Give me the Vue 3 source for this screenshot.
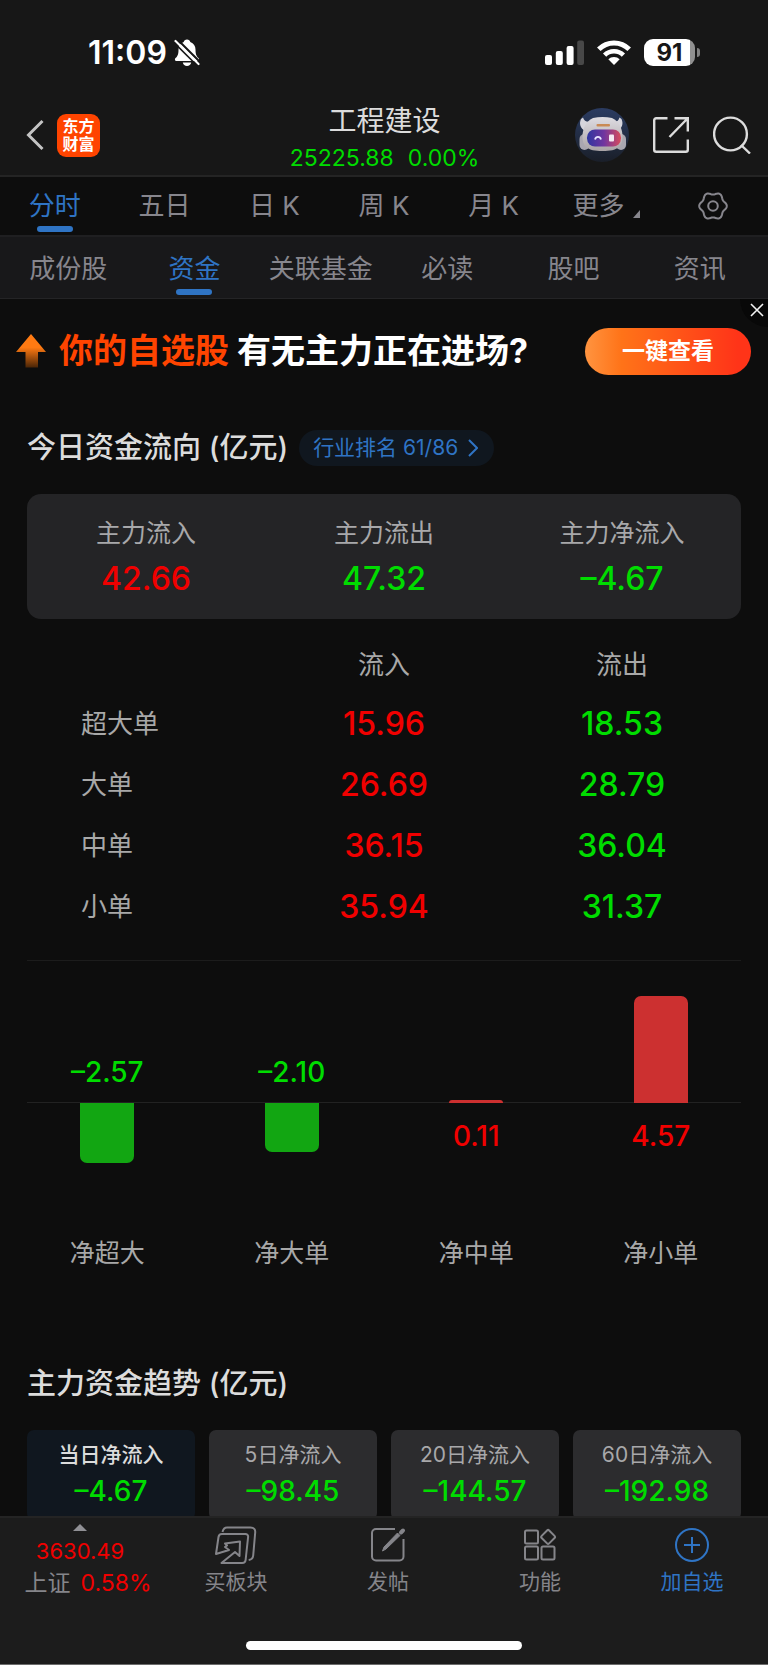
<script setup>
import { ref } from 'vue'

const periods = ['分时', '五日', '日 K', '周 K', '月 K']
const activePeriod = ref('分时')

const sections = ['成份股', '资金', '关联基金', '必读', '股吧', '资讯']
const activeSection = ref('资金')

const showBanner = ref(true)

const summary = [
  { label: '主力流入', value: '42.66', tone: 'up' },
  { label: '主力流出', value: '47.32', tone: 'down' },
  { label: '主力净流入', value: '–4.67', tone: 'down' }
]

const orders = [
  { name: '超大单', inflow: '15.96', outflow: '18.53' },
  { name: '大单', inflow: '26.69', outflow: '28.79' },
  { name: '中单', inflow: '36.15', outflow: '36.04' },
  { name: '小单', inflow: '35.94', outflow: '31.37' }
]

const nets = [
  { name: '净超大', value: -2.57 },
  { name: '净大单', value: -2.1 },
  { name: '净中单', value: 0.11 },
  { name: '净小单', value: 4.57 }
]
const PX_PER_UNIT = 23.4
const barHeight = (v) => Math.round(Math.abs(v) * PX_PER_UNIT) + 'px'
const format = (v) => (v < 0 ? '–' : '') + Math.abs(v).toFixed(2)

const ranges = [
  { label: '当日净流入', value: '–4.67' },
  { label: '5日净流入', value: '–98.45' },
  { label: '20日净流入', value: '–144.57' },
  { label: '60日净流入', value: '–192.98' }
]
const activeRange = ref('当日净流入')

// Six-lobed outline of the settings gear, centred in a 30×30 box.
const gearPoints = Array.from({ length: 120 }, (_, i) => {
  const a = (i / 120) * Math.PI * 2
  const r = 12.6 + 1.2 * Math.cos(6 * a)
  return `${(15 + r * Math.cos(a)).toFixed(2)},${(15 + r * Math.sin(a)).toFixed(2)}`
}).join(' ')
</script>

<template>
  <div class="app">
    <div class="status">
      <div class="status-left">
        <span class="clock">11:09</span>
        <svg width="26" height="28" viewBox="0 0 26 28" aria-hidden="true">
          <path fill="#fff" d="M13 0.5c-1.8 0-3 1-3.3 2.4C6.300 4 4.500 7 4.500 10.500c0 5-1 6.700-3 8.600-.8.800-.9 2.900.5 2.900h22c1.400 0 1.300-2.100.5-2.900-2-1.900-3-3.600-3-8.600 0-3.500-1.800-6.500-5.200-7.600C16 1.500 14.800.5 13 .5zM8.800 23.500h8.400c-.4 2.200-2 3.500-4.200 3.500s-3.800-1.300-4.200-3.500z" />
          <path d="M3.500 0.500 27 24" stroke="#171717" stroke-width="2" />
          <path d="M1.500 2 24.500 25" stroke="#fff" stroke-width="2.200" stroke-linecap="round" />
          <path d="M0 3.500 23.500 27" stroke="#171717" stroke-width="1.600" />
        </svg>
      </div>
      <div class="status-right">
        <svg width="39" height="26" viewBox="0 0 39 26" aria-hidden="true">
          <rect x="0" y="15" width="7" height="10" rx="2" fill="#fff" />
          <rect x="10.800" y="11" width="7" height="14" rx="2" fill="#fff" />
          <rect x="21.600" y="6" width="7" height="19" rx="2" fill="#fff" />
          <rect x="32.200" y="0.500" width="6.800" height="24.500" rx="2" fill="#484848" />
        </svg>
        <svg width="36" height="26" viewBox="0 0 36 26" aria-hidden="true">
          <path d="M2.800 9.300a21.500 21.500 0 0 1 30.400 0" fill="none" stroke="#fff" stroke-width="5" />
          <path d="M8.600 15.200a13.300 13.300 0 0 1 18.800 0" fill="none" stroke="#fff" stroke-width="4.600" />
          <path d="M12.300 19.300a8 8 0 0 1 11.400 0L18 25z" fill="#fff" />
        </svg>
        <span class="battery"><span class="battery-body">91</span><span class="battery-tip"></span></span>
      </div>
    </div>

    <header class="header">
      <div class="header-left">
        <button class="icon-btn" aria-label="返回">
          <svg width="20" height="32" viewBox="0 0 20 32"><path d="M17.500 2 3.500 16l14 14" fill="none" stroke="#c4c4c4" stroke-width="3" /></svg>
        </button>
        <a class="logo" href="#"><span>东方</span><span>财富</span></a>
      </div>
      <div class="heading">
        <h1>工程建设</h1>
        <p><span>25225.88</span><span>0.00%</span></p>
      </div>
      <div class="header-right">
        <button class="icon-btn" aria-label="智能助手">
          <svg width="54" height="54" viewBox="0 0 54 54">
            <defs>
              <linearGradient id="disc" x1="0" y1="0" x2="0" y2="1"><stop offset="0" stop-color="#2b3c62" /><stop offset="1" stop-color="#1a1f29" /></linearGradient>
              <linearGradient id="shell" x1="0" y1="0" x2="0" y2="1"><stop offset="0" stop-color="#dedce2" /><stop offset="1" stop-color="#aaa4a6" /></linearGradient>
              <linearGradient id="visor" x1="0" y1="0" x2="1" y2="0"><stop offset="0" stop-color="#2f36a0" /><stop offset="0.500" stop-color="#70359f" /><stop offset="1" stop-color="#d84c5c" /></linearGradient>
            </defs>
            <circle cx="27" cy="27" r="27" fill="url(#disc)" />
            <path d="M6 11c-2 4.500-1 9 4 12l7-10c-4 1.500-8 .5-9-3.500zM46.500 11c2 4.500 1 9-4 12l-6-10c4 1.500 7 .5 8-3.500z" fill="#d6d5dc" />
            <rect x="4.500" y="26" width="10" height="16" rx="5" fill="#a9a7b0" />
            <rect x="41" y="26" width="10" height="16" rx="5" fill="#a9a7b0" />
            <path d="M18 10c6-1.500 13-1.500 19 0 6 2.500 10.500 9.500 10.500 18.500 0 10-4.500 14.500-20 14.500S7.500 38.500 7.500 28.500C7.500 19.500 12 12.500 18 10z" fill="url(#shell)" />
            <rect x="21.500" y="16" width="13.500" height="2.400" rx="1" fill="#c98a55" />
            <rect x="12" y="21.500" width="34" height="17" rx="8" fill="url(#visor)" />
            <path d="M20 31.500c1-3.500 5-3.500 6 0" fill="none" stroke="#e8e4ff" stroke-width="1.800" />
            <rect x="34" y="26.500" width="5" height="7" rx="1" fill="#f4e9f1" />
          </svg>
        </button>
        <button class="icon-btn" aria-label="分享">
          <svg width="36" height="36" viewBox="0 0 36 36" fill="none" stroke="#dcdcdc" stroke-width="2.400">
            <path d="M14.500 1.200H3.200a2 2 0 0 0-2 2v29.600a2 2 0 0 0 2 2h29.600a2 2 0 0 0 2-2V22.500" />
            <path d="M21.500 1.200h13.300v13.300M34.500 1.500 16.500 20" />
          </svg>
        </button>
        <button class="icon-btn" aria-label="搜索">
          <svg width="38" height="38" viewBox="0 0 38 38" fill="none" stroke="#dcdcdc" stroke-width="2.400">
            <circle cx="17.500" cy="18" r="16.400" /><path d="m28 29 9 8.500" />
          </svg>
        </button>
      </div>
    </header>

    <nav class="periods" aria-label="周期">
      <button v-for="p in periods" :key="p" class="tab" :class="{ active: p === activePeriod }" @click="activePeriod = p">{{ p }}</button>
      <button class="tab more">更多<i class="corner"></i></button>
      <button class="tab" aria-label="设置">
        <svg width="30" height="30" viewBox="0 0 30 30" fill="none" stroke="#87868d" stroke-width="2" stroke-linejoin="round">
          <polygon :points="gearPoints" />
          <circle cx="15" cy="15" r="4.800" />
        </svg>
      </button>
    </nav>

    <nav class="sections" aria-label="栏目">
      <button v-for="s in sections" :key="s" class="tab" :class="{ active: s === activeSection }" @click="activeSection = s">{{ s }}</button>
    </nav>

    <main class="content">
      <aside v-if="showBanner" class="banner">
        <svg width="30" height="34" viewBox="0 0 30 34" aria-hidden="true">
          <defs><linearGradient id="rise" x1="0" y1="0" x2="0" y2="1"><stop offset="0.400" stop-color="#ff7a12" /><stop offset="1" stop-color="#4a2507" /></linearGradient></defs>
          <path d="M15 0 30 18h-8v15.500H9.500V18H0z" fill="url(#rise)" />
        </svg>
        <p class="slogan"><em>你的自选股</em><span>有无主力正在进场?</span></p>
        <button class="cta">一键查看</button>
        <button class="close" aria-label="关闭" @click="showBanner = false">
          <svg width="14" height="14" viewBox="0 0 14 14"><path d="m1 1 12 12M13 1 1 13" stroke="#f2f2f2" stroke-width="1.600" /></svg>
        </button>
      </aside>

      <section class="flow">
        <div class="title-row">
          <h2>今日资金流向 (亿元)</h2>
          <a class="rank" href="#">行业排名 61/86
            <svg width="10" height="18" viewBox="0 0 10 18"><path d="m1 1 8 8-8 8" fill="none" stroke="#2f74c4" stroke-width="2" /></svg>
          </a>
        </div>

        <dl class="summary">
          <div v-for="s in summary" :key="s.label">
            <dt>{{ s.label }}</dt>
            <dd :class="s.tone">{{ s.value }}</dd>
          </div>
        </dl>

        <table class="orders">
          <thead>
            <tr><td></td><th scope="col">流入</th><th scope="col">流出</th></tr>
          </thead>
          <tbody>
            <tr v-for="o in orders" :key="o.name">
              <th scope="row">{{ o.name }}</th>
              <td class="up">{{ o.inflow }}</td>
              <td class="down">{{ o.outflow }}</td>
            </tr>
          </tbody>
        </table>
      </section>

      <div class="rule"></div>

      <section class="chart" aria-label="净流入">
        <div v-for="n in nets" :key="n.name" class="net">
          <div class="above">
            <span v-if="n.value < 0" class="down">{{ format(n.value) }}</span>
            <div v-else class="bar rise" :style="{ height: barHeight(n.value) }"></div>
          </div>
          <div class="below">
            <div v-if="n.value < 0" class="bar fall" :style="{ height: barHeight(n.value) }"></div>
            <span v-else class="up">{{ format(n.value) }}</span>
          </div>
          <span class="net-name">{{ n.name }}</span>
        </div>
      </section>

      <section class="trend">
        <h2>主力资金趋势 (亿元)</h2>
        <div class="ranges">
          <button v-for="r in ranges" :key="r.label" class="range" :class="{ active: r.label === activeRange }" @click="activeRange = r.label">
            <span>{{ r.label }}</span>
            <b class="down">{{ r.value }}</b>
          </button>
        </div>
      </section>
    </main>

    <footer class="footer">
      <nav class="actions" aria-label="操作">
        <button class="index">
          <i class="caret"></i>
          <span class="up index-value">3630.49</span>
          <span class="index-row">上证<span class="up">0.58%</span></span>
        </button>
        <button class="action">
          <svg width="42" height="40" viewBox="0 0 42 40" fill="none" stroke="#85858a" stroke-width="2" stroke-linejoin="round">
            <path d="M7.500 7C8.200 4 9.500 2.500 12 2.500h23.500c3.500 0 5 2 4.700 5l-2 23c-.2 2.200-1.500 4-4.500 4.500" />
            <path d="M1 29 3.500 12c.3-2 1.300-3 3.300-3h23.500c2 0 3 1.200 2.800 3l-2.500 23c-.2 2-1.300 3-3.300 3H6.500l13.500-11 4.500 4 .5-14.500-15 2 2 2-2 1.500 4 3z" />
          </svg>
          <span>买板块</span>
        </button>
        <button class="action">
          <svg width="36" height="40" viewBox="0 0 36 40" fill="none" stroke="#85858a" stroke-width="2">
            <path d="M25 4H6a4 4 0 0 0-4 4v23.500a4 4 0 0 0 4 4h23.500a4 4 0 0 0 4-4V14" />
            <path d="M12.500 26l1.500-4L27.500 8l2.500 2.500L16 24z" fill="#85858a" stroke-width="1" />
            <path d="m31 7.500 2-2" stroke-width="4" stroke-linecap="round" />
          </svg>
          <span>发帖</span>
        </button>
        <button class="action">
          <svg width="34" height="40" viewBox="0 0 34 40" fill="none" stroke="#85858a" stroke-width="2">
            <rect x="2" y="5.500" width="13" height="13" rx="1.500" />
            <rect x="2" y="21.500" width="13" height="13" rx="1.500" />
            <rect x="18.500" y="21.500" width="13" height="13" rx="1.500" />
            <rect x="19.800" y="6.600" width="10.600" height="10.600" rx="1.500" transform="rotate(45 25.100 11.900)" />
          </svg>
          <span>功能</span>
        </button>
        <button class="action primary">
          <svg width="36" height="40" viewBox="0 0 36 40" fill="none" stroke="#2f74c4" stroke-width="2">
            <circle cx="18" cy="20" r="16" /><path d="M18 12v16M10 20h16" />
          </svg>
          <span>加自选</span>
        </button>
      </nav>
      <div class="home-bar"></div>
    </footer>
  </div>
</template>

<style>
body {
  background: #0d0d0d;
}
</style>

<style scoped>
.app {
  height: 100vh;
  display: flex;
  flex-direction: column;
  background: #0d0d0d;
  color: #dcdcdc;
  font-family: Inter, "Noto Sans CJK SC", sans-serif;
}
button {
  padding: 0;
  border: 0;
  background: none;
  color: inherit;
  font: inherit;
  cursor: pointer;
}
a {
  text-decoration: none;
}
h1,
h2,
p,
dl,
dd {
  margin: 0;
}
svg {
  display: block;
  flex: none;
}
.up {
  color: #f00000;
}
.down {
  color: #00dc00;
}

/* status bar */
.status {
  flex: none;
  display: flex;
  justify-content: space-between;
  align-items: center;
  height: 85px;
  padding: 10px 68px 0 88px;
  background: #171717;
  color: #fff;
}
.status-left,
.status-right {
  display: flex;
  align-items: center;
}
.status-left {
  gap: 7px;
}
.status-right {
  gap: 12px;
}
.clock {
  font-size: 32px;
  line-height: 40px;
  font-weight: 600;
}
.battery {
  display: flex;
  align-items: center;
  gap: 2px;
}
.battery-body {
  width: 51px;
  border-radius: 9px;
  background: linear-gradient(to right, #fff 46px, #909090 46px);
  color: #171717;
  font-size: 24px;
  line-height: 27px;
  font-weight: 700;
  text-align: center;
}
.battery-tip {
  width: 3px;
  height: 9px;
  border-radius: 0 4px 4px 0;
  background: #808080;
}

/* title bar */
.header {
  flex: none;
  display: grid;
  grid-template-columns: 1fr auto 1fr;
  align-items: center;
  height: 80px;
  padding: 0 17px 0 18px;
  border-bottom: 2px solid #242424;
  background: #171717;
}
.header-left,
.header-right {
  display: flex;
  align-items: center;
}
.header-left {
  gap: 12px;
  padding-left: 7px;
}
.header-right {
  justify-content: flex-end;
  gap: 24px;
}
.logo {
  display: flex;
  flex-direction: column;
  align-items: center;
  justify-content: center;
  width: 43px;
  height: 43px;
  border-radius: 9px;
  background: #ff4400;
  color: #fff;
  font-size: 16px;
  line-height: 18px;
  font-weight: 700;
}
.heading {
  padding-top: 8px;
  text-align: center;
}
.heading h1 {
  font-size: 28px;
  line-height: 36px;
  font-weight: 400;
}
.heading p {
  display: flex;
  justify-content: center;
  gap: 14px;
  margin-top: 2px;
  color: #00dc00;
  font-size: 23px;
  line-height: 34px;
}

/* tab rows */
.periods,
.sections {
  flex: none;
  display: grid;
}
.periods {
  grid-template-columns: repeat(7, 1fr);
  height: 58px;
  border-bottom: 2px solid #1f1f21;
}
.sections {
  grid-template-columns: repeat(6, 1fr);
  height: 61px;
  padding: 0 5px;
  border-bottom: 1px solid #242426;
  background: #18181a;
}
.tab {
  position: relative;
  display: flex;
  align-items: center;
  justify-content: center;
  color: #87868d;
  font-size: 26px;
  line-height: 36px;
  white-space: nowrap;
}
.sections .tab {
  padding-top: 2px;
}
.tab.more {
  padding-left: 6px;
}
.tab.active {
  color: #2f74c4;
}
.tab.active::after {
  content: "";
  position: absolute;
  bottom: 3px;
  width: 36px;
  height: 6px;
  border-radius: 3px;
  background: #2f74c4;
}
.corner {
  align-self: flex-end;
  margin: 0 0 17px 9px;
  border-left: 7px solid transparent;
  border-bottom: 8px solid #87868d;
}

/* scrolling content */
.content {
  flex: 1;
  min-height: 0;
  overflow-y: auto;
  scrollbar-width: none;
}
.banner {
  position: relative;
  display: flex;
  align-items: center;
  height: 104px;
  padding: 0 17px 0 16px;
}
.slogan {
  display: flex;
  flex: 1;
  gap: 8px;
  margin-left: 13px;
  color: #fff;
  font-size: 34px;
  line-height: 48px;
  font-weight: 700;
  white-space: nowrap;
}
.slogan em {
  color: #ff4400;
  font-style: normal;
}
.cta {
  width: 166px;
  height: 47px;
  border-radius: 24px;
  background: linear-gradient(to right, #ff9440, #ff7318 22%, #ff3418 92%);
  color: #fff;
  font-size: 23px;
  line-height: 32px;
  font-weight: 700;
}
.close {
  position: absolute;
  top: 0;
  right: 0;
  display: flex;
  justify-content: flex-end;
  width: 28px;
  height: 28px;
  padding: 4px 4px 0 0;
  border-bottom-left-radius: 28px;
  background: #080808;
}
.flow,
.trend {
  padding: 0 27px;
}
h2 {
  font-size: 29px;
  line-height: 36px;
  font-weight: 500;
}
.title-row {
  display: flex;
  align-items: center;
  gap: 11px;
  margin-top: 27px;
}
.rank {
  display: flex;
  align-items: center;
  gap: 10px;
  padding: 0 16px 0 14px;
  border-radius: 18px;
  background: #10171f;
  color: #2f74c4;
  font-size: 21px;
  line-height: 36px;
}
.summary {
  display: grid;
  grid-template-columns: repeat(3, 1fr);
  margin-top: 28px;
  padding: 20px 0;
  border-radius: 14px;
  background: #242426;
  text-align: center;
}
.summary dt {
  color: #a8a8aa;
  font-size: 25px;
  line-height: 38px;
}
.summary dd {
  margin-top: 7px;
  font-size: 32px;
  line-height: 40px;
  font-weight: 500;
}
.orders {
  width: 100%;
  margin-top: 18px;
  border-collapse: collapse;
  table-layout: fixed;
}
.orders th,
.orders td {
  box-sizing: border-box;
  padding: 0;
  height: 61px;
  text-align: center;
}
.orders th {
  color: #a8a8a8;
  font-size: 26px;
  font-weight: 400;
  line-height: 36px;
}
.orders thead th,
.orders thead td {
  height: 56px;
}
.orders tbody th {
  padding-left: 54px;
  text-align: left;
}
.orders td {
  font-size: 32px;
  line-height: 40px;
  font-weight: 500;
}
.rule {
  height: 1px;
  margin: 23px 27px 0;
  background: #1c1c1c;
}
.chart {
  position: relative;
  display: grid;
  grid-template-columns: repeat(4, 1fr);
  padding: 0 15px;
}
.chart::before {
  content: "";
  position: absolute;
  top: 141px;
  left: 27px;
  right: 27px;
  height: 1px;
  background: #222222;
}
.net {
  position: relative;
  display: flex;
  flex-direction: column;
  align-items: center;
  font-size: 28px;
  line-height: 30px;
}
.above,
.below {
  display: flex;
  flex-direction: column;
  align-items: center;
  font-weight: 500;
}
.above {
  height: 142px;
  justify-content: flex-end;
}
.above span {
  margin-bottom: 16px;
}
.below {
  height: 131px;
}
.below span {
  margin-top: 18px;
}
.bar {
  width: 54px;
}
.rise {
  border-radius: 7px 7px 0 0;
  background: #cc3030;
}
.fall {
  border-radius: 0 0 7px 7px;
  background: #12a612;
}
.net-name {
  color: #a8a8a8;
  font-size: 25px;
  line-height: 38px;
}
.trend {
  padding-top: 94px;
  padding-bottom: 30px;
}
.ranges {
  display: grid;
  grid-template-columns: repeat(4, 1fr);
  gap: 14px;
  margin-top: 28px;
}
.range {
  display: flex;
  flex-direction: column;
  align-items: center;
  gap: 4px;
  padding: 10px 0 12px;
  border-radius: 7px;
  background: #2c2c2e;
  color: #a8a8aa;
  font-size: 21px;
  line-height: 30px;
}
.range b {
  font-size: 28px;
  line-height: 34px;
  font-weight: 500;
}
.range.active {
  background: #10171f;
  color: #dcdcdc;
  font-weight: 500;
}

/* bottom bar */
.footer {
  flex: none;
  border-top: 2px solid #242424;
  border-bottom: 1px solid #6c6c6c;
  background: #1c1c1c;
}
.actions {
  display: grid;
  grid-template-columns: 20fr repeat(4, 19fr);
  align-items: start;
  height: 83px;
}
.index {
  display: flex;
  flex-direction: column;
  align-items: center;
  padding-top: 6px;
  color: #85858a;
  font-size: 23px;
  line-height: 32px;
}
.index-value {
  font-size: 22px;
}
.caret {
  margin-bottom: 4px;
  border: 7px solid transparent;
  border-top: 0;
  border-bottom-color: #909095;
}
.index-row {
  display: flex;
  gap: 10px;
  padding-left: 16px;
}
.action {
  display: flex;
  flex-direction: column;
  align-items: center;
  gap: 3px;
  padding-top: 7px;
  color: #85858a;
  font-size: 21px;
  line-height: 28px;
}
.action.primary {
  color: #2f74c4;
}
.home-bar {
  width: 36%;
  height: 9px;
  margin: 40px auto 14px;
  border-radius: 5px;
  background: #fff;
}
</style>
